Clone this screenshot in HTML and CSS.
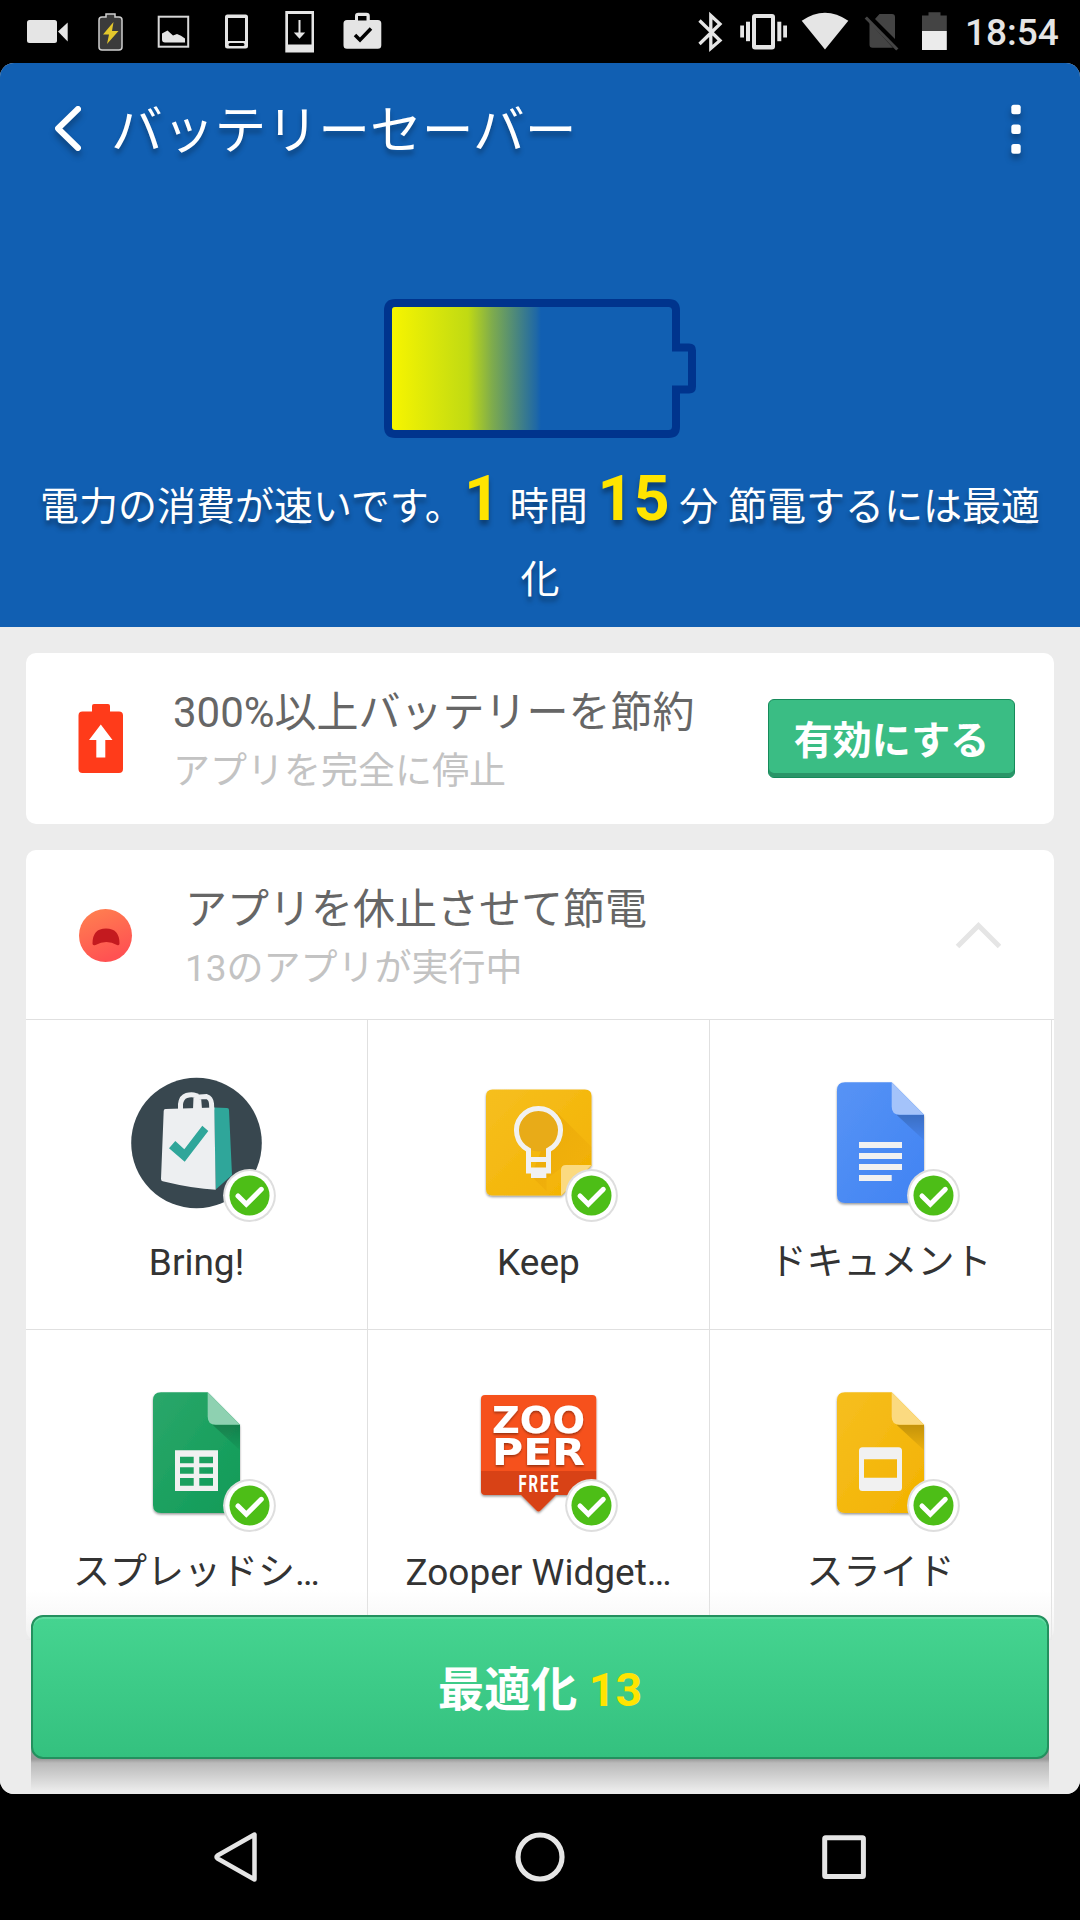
FILE: index.html
```html
<!DOCTYPE html>
<html lang="ja">
<head>
<meta charset="utf-8">
<title>バッテリーセーバー</title>
<link rel="stylesheet" href="styles.css">
</head>
<body>
<svg class="defs" width="0" height="0" aria-hidden="true">
  <defs>
    <linearGradient id="charge" x1="0" x2="1" y1="0" y2="0">
      <stop offset="0" stop-color="#f7f500"/>
      <stop offset=".51" stop-color="#c0da13"/>
      <stop offset=".67" stop-color="#7fac4c"/>
      <stop offset=".97" stop-color="#1f68a6"/>
      <stop offset="1" stop-color="#115fb2"/>
    </linearGradient>
    <linearGradient id="face" x1="0" x2=".4" y1="0" y2="1">
      <stop offset="0" stop-color="#ff8350"/>
      <stop offset="1" stop-color="#ff5252"/>
    </linearGradient>
    <linearGradient id="blue" x1="0" x2="1" y1="0" y2="1"><stop offset="0" stop-color="#5793f5"/><stop offset="1" stop-color="#4083f3"/></linearGradient>
    <linearGradient id="green" x1="0" x2="1" y1="0" y2="1"><stop offset="0" stop-color="#2ba76a"/><stop offset="1" stop-color="#0f9b57"/></linearGradient>
    <linearGradient id="amber" x1="0" x2="1" y1="0" y2="1"><stop offset="0" stop-color="#f6bf20"/><stop offset="1" stop-color="#f3b200"/></linearGradient>
    <linearGradient id="fold-shade" x1="0" x2="0" y1="0" y2="1"><stop offset="0" stop-color="#000" stop-opacity=".2"/><stop offset="1" stop-color="#000" stop-opacity=".03"/></linearGradient>
    <linearGradient id="long-shade" x1="0" x2="1" y1="0" y2="1"><stop offset="0" stop-color="#d98c00" stop-opacity=".35"/><stop offset="1" stop-color="#d98c00" stop-opacity=".02"/></linearGradient>
    <filter id="drop" x="-20%" y="-20%" width="140%" height="140%"><feDropShadow dx="0" dy="1.5" stdDeviation="1.2" flood-opacity=".4"/></filter>
    <symbol id="badge" viewBox="0 0 54 54">
      <circle cx="27" cy="27" r="26.4" fill="#dedede"/>
      <circle cx="27" cy="27" r="24.4" fill="#fff"/>
      <circle cx="27" cy="27" r="20" fill="#4dbe17"/>
      <path d="M15.5 27.5l8.3 8.3 15-15" fill="none" stroke="#fff" stroke-width="5" stroke-linecap="round"/>
    </symbol>
  </defs>
</svg>

<header class="status-bar">
  <svg class="status-icons" width="400" height="63" viewBox="0 0 400 63">
    <g fill="#e5e5e5">
      <rect x="27" y="20" width="30" height="23" rx="2.5"/>
      <path d="M58 31.500l9.700-9v19z"/>
    </g>
    <path d="M102 17h4v-3h9v3h4q3 0 3 3v27q0 3-3 3h-17q-3 0-3-3V20q0-3 3-3z" fill="#3b3b3b" stroke="#cfcfcf" stroke-width="1.500"/>
    <path d="M113.500 22l-10.500 12.500h6l-2 9.500 11.500-13h-6.500z" fill="#e3c72c"/>
    <rect x="158.700" y="16.700" width="29.500" height="30" fill="none" stroke="#d8d8d8" stroke-width="2"/>
    <path d="M162 33.500l5.500-3 5.500 5 4-1.500q4 1 8 4.500v4h-20q-3 0-3-3z" fill="#e5e5e5"/>
    <path d="M227.500 14.500h18q2.500 0 2.500 2.500v29q0 2.500-2.500 2.500h-18q-2.500 0-2.500-2.500V17q0-2.500 2.500-2.500zM228 18v23h17V18zM230 43q-1.500 0-1.500 1.500t1.500 1.500h13q1.500 0 1.500-1.500T243 43z" fill="#e5e5e5" fill-rule="evenodd"/>
    <path d="M285.300 11h28.700v41.500h-28.700zM288 14v30.500h23.500V14z" fill="#e5e5e5" fill-rule="evenodd"/>
    <path d="M298.500 20h2v12.500h4.700l-5.700 6.300-5.700-6.300h4.700z" fill="#e5e5e5"/>
    <path d="M347 20h8v-4q0-3.300 3.300-3.300h8.200q3.300 0 3.300 3.300v4h8q3.500 0 3.500 3.500v21.700q0 3.500-3.500 3.500H347q-3.500 0-3.500-3.500V23.500q0-3.500 3.500-3.500zm11-4v4.500h8.500V16z" fill="#e5e5e5" fill-rule="evenodd"/>
    <path d="M355 35l5 5 11-11.500" fill="none" stroke="#000" stroke-width="3.500"/>
  </svg>
  <div class="status-right">
    <svg width="270" height="63" viewBox="690 0 270 63">
      <path d="M699.500 20.500l20.500 20-9.200 8V15.500l9.200 8.500-20.500 20" fill="none" stroke="#e5e5e5" stroke-width="3.300"/>
      <g fill="#e5e5e5">
        <path d="M755 14h17q3 0 3 3v29.500q0 3-3 3h-17q-3 0-3-3V17q0-3 3-3zm1 4v27h15V18z" fill-rule="evenodd"/>
        <rect x="740.200" y="25.500" width="3.800" height="12"/><rect x="746" y="21.700" width="4" height="19.500"/>
        <rect x="777.300" y="21.700" width="4" height="19.500"/><rect x="783.200" y="25.500" width="3.800" height="12"/>
        <path d="M825 49.500l-23.300-28.700q23.300-16 46.600 0z"/>
      </g>
      <path d="M869.500 22.500v22.300q0 3 3 3H893zM875 19l4.500-5H892q3 0 3 3v22z" fill="#444"/>
      <path d="M865.800 17.500l31.500 32" stroke="#444" stroke-width="3.200"/>
      <path d="M922 15.500h6.500v-3.200h12v3.200h6.300V31H922z" fill="#444"/>
      <path d="M922 31h24.800v19H922z" fill="#ebebeb"/>
    </svg>
    <span class="clock">18:54</span>
  </div>
</header>

<main class="app">
  <section class="hero">
    <div class="title-bar">
      <svg class="back" width="40" height="60" viewBox="0 0 40 60"><path d="M29 10L9 29.500 29 49" fill="none" stroke="#fff" stroke-width="6" stroke-linecap="round" stroke-linejoin="round"/></svg>
      <h1>バッテリーセーバー</h1>
      <svg class="menu" width="10" height="50" viewBox="0 0 10 50" fill="#fff"><rect x=".3" y=".7" width="9.400" height="9.600" rx="2.500"/><rect x=".3" y="20.400" width="9.400" height="9.600" rx="2.500"/><rect x=".3" y="40.100" width="9.400" height="9.600" rx="2.500"/></svg>
    </div>
    <svg class="battery" width="312" height="139" viewBox="0 0 312 139">
      <path d="M11.500 4h273Q292 4 292 11.500V48.500h13q3 0 3 3V87.500q0 3-3 3h-13V127.500Q292 135 284.500 135H11.500Q4 135 4 127.500V11.500Q4 4 11.500 4z" fill="none" stroke="#00348d" stroke-width="8"/>
      <rect x="8" y="8" width="149" height="123" rx="3" fill="url(#charge)"/>
    </svg>
    <p class="estimate">電力の消費が速いです。<b>1</b> 時間 <b>15</b> 分 節電するには最適化</p>
  </section>

  <section class="list">
    <article class="card promo">
      <svg class="promo-icon" width="46" height="70" viewBox="0 0 46 70">
        <path d="M14 7.500V2q0-2 2-2h14q2 0 2 2v5.500h9q4 0 4 4V65q0 4-4 4H4.500q-4 0-4-4V11.500q0-4 4-4z" fill="#ff3b1a"/>
        <path d="M22.800 20.500L34.500 36h-7.200v17.500h-9V36H11z" fill="#fff"/>
      </svg>
      <div class="text">
        <h2>300%以上バッテリーを節約</h2>
        <p>アプリを完全に停止</p>
      </div>
      <button class="enable">有効にする</button>
    </article>

    <article class="card apps">
      <header class="apps-head">
        <svg class="face" width="54" height="54" viewBox="0 0 54 54">
          <circle cx="26.500" cy="27.500" r="26.500" fill="url(#face)"/>
          <path d="M13.500 35.500q0-15 13.500-15t13.500 15q0 2.500-2.500 1.500-10.500-6-21.500 0-3 1-3-1.500z" fill="#c41a1f"/>
        </svg>
        <div class="text">
          <h2>アプリを休止させて節電</h2>
          <p>13のアプリが実行中</p>
        </div>
        <svg class="chevron" width="46" height="28" viewBox="0 0 46 28"><path d="M2.500 25.500L23.500 4.500l21 21" fill="none" stroke="#e5e5e5" stroke-width="5"/></svg>
      </header>
      <div class="grid">
        <div class="app-cell">
          <svg width="160" height="160" viewBox="0 0 160 160">
            <circle cx="80" cy="80" r="65.300" fill="#38474f"/>
            <path d="M97.500 44.500l13 .5q2 0 2 2l3 65-16.300 14.500z" fill="#2fa69a"/>
            <path d="M49 46l48.800-1.500 1.400 82.200q-22-1-53-8.500-1.800-.5-1.700-2.500L47.200 48q0-2 1.800-2z" fill="#edeff1"/>
            <path d="M64 46v-5q1-7 6-8.500t9.500 0q0 3-.5 13.500M83 46l-1-12 8-.5q4.500 1.500 5 7l.3 6" fill="none" stroke="#edeff1" stroke-width="5"/>
            <path d="M52.500 85.300l6.300-7.300 9 8.300 18-23.600 6 5.300-23.600 30.700z" fill="#2fa69a"/>
            <use href="#badge" x="106" y="105.500" width="54" height="54"/>
          </svg>
          <span>Bring!</span>
        </div>
        <div class="app-cell">
          <svg width="160" height="160" viewBox="0 0 160 160">
            <path d="M34 26.500h92.500q6.500 0 6.500 6.500v69.500L103 132.500H34q-6.500 0-6.500-6.500V33q0-6.500 6.500-6.500z" fill="url(#amber)" filter="url(#drop)"/>
            <path d="M98 49l35 35v18.500h-27L88 116v12L72.500 113z" fill="url(#long-shade)"/>
            <path d="M102.500 132.500V107q0-5 5-5H133z" fill="#fbda80"/>
            <circle cx="80" cy="66.500" r="22" fill="#e8ab18"/>
            <path d="M70 108V87a22 22 0 1 1 20 0v21zM70 96.500h20M70 107h20" fill="none" stroke="#f1f1f1" stroke-width="5"/>
            <path d="M72.500 105h15.300v10H72.500z" fill="#f1f1f1"/>
            <use href="#badge" x="106" y="105.500" width="54" height="54"/>
          </svg>
          <span>Keep</span>
        </div>
        <div class="app-cell">
          <svg width="160" height="160" viewBox="0 0 160 160">
            <path d="M44.500 19.300h46.700l32.300 32.400V132q0 8-8 8h-71q-8 0-8-8V27.300q0-8 8-8z" fill="url(#blue)" filter="url(#drop)"/>
            <path d="M96 51.700h27.500v25.500z" fill="url(#fold-shade)"/>
            <path d="M91.200 19.300v24.400q0 8 8 8h24.300z" fill="#a4c3fa"/>
            <path d="M58.500 79h43v6h-43zM58.500 90h43v6h-43zM58.500 101h43v6h-43zM58.500 112h32.700v6H58.500z" fill="#f1f1f1"/>
            <use href="#badge" x="106" y="105.500" width="54" height="54"/>
          </svg>
          <span>ドキュメント</span>
        </div>
        <div class="app-cell">
          <svg width="160" height="160" viewBox="0 0 160 160">
            <path d="M44.500 19.300h46.700l32.300 32.400V132q0 8-8 8h-71q-8 0-8-8V27.300q0-8 8-8z" fill="url(#green)" filter="url(#drop)"/>
            <path d="M96 51.700h27.500v25.500z" fill="url(#fold-shade)"/>
            <path d="M91.200 19.300v24.400q0 8 8 8h24.300z" fill="#8ed1b1"/>
            <path d="M58.500 77.300h43V118h-43zm5 6.400v6.600h13.700v-6.600zm19.300 0v6.600h13.700v-6.600zM63.500 94.300v6.500h13.700v-6.500zm19.300 0v6.500h13.700v-6.500zM63.500 105v7.700h13.700V105zm19.300 0v7.700h13.700V105z" fill="#f1f1f1" fill-rule="evenodd"/>
            <use href="#badge" x="106" y="105.500" width="54" height="54"/>
          </svg>
          <span>スプレッドシ…</span>
        </div>
        <div class="app-cell">
          <svg width="160" height="160" viewBox="0 0 160 160">
            <g filter="url(#drop)">
              <path d="M22.500 98h115.300v20q0 4-4 4H97.500L82 137.500q-2 2-4 0L62.500 122h-36q-4 0-4-4z" fill="#d84315"/>
              <path d="M26.500 22h107.300q4 0 4 4v72H22.500V26q0-4 4-4z" fill="#f6511d"/>
            </g>
            <g class="logo" filter="url(#drop)">
              <text x="33.500" y="60" font-size="37" textLength="93" lengthAdjust="spacingAndGlyphs">ZOO</text>
              <text x="33.500" y="92" font-size="37" textLength="93" lengthAdjust="spacingAndGlyphs">PER</text>
            </g>
            <text class="logo-free" x="60" y="119" font-size="23.500" textLength="42" lengthAdjust="spacingAndGlyphs">FREE</text>
            <use href="#badge" x="106" y="105.500" width="54" height="54"/>
          </svg>
          <span>Zooper Widget…</span>
        </div>
        <div class="app-cell">
          <svg width="160" height="160" viewBox="0 0 160 160">
            <path d="M44.500 19.300h46.700l32.300 32.400V132q0 8-8 8h-71q-8 0-8-8V27.300q0-8 8-8z" fill="url(#amber)" filter="url(#drop)"/>
            <path d="M96 51.700h27.500v25.500z" fill="url(#fold-shade)"/>
            <path d="M91.200 19.300v24.400q0 8 8 8h24.300z" fill="#fbda80"/>
            <path d="M62 74.300h36q3.500 0 3.500 3.500v36.700q0 3.500-3.500 3.500H62q-3.500 0-3.500-3.500V77.800q0-3.500 3.500-3.500zm1.500 12v18.400h33V86.300z" fill="#f1f1f1" fill-rule="evenodd"/>
            <use href="#badge" x="106" y="105.500" width="54" height="54"/>
          </svg>
          <span>スライド</span>
        </div>
      </div>
    </article>
  </section>

  <footer class="action">
    <button class="optimize">最適化 <b>13</b></button>
    <div class="action-shadow"></div>
  </footer>
</main>

<nav class="nav-bar">
  <svg width="50" height="54" viewBox="0 0 50 54"><path d="M43.500 4.500v45L6.500 28.500q-2-1.500 0-3z" fill="none" stroke="#e5e5e5" stroke-width="4.500" stroke-linejoin="round"/></svg>
  <svg width="50" height="54" viewBox="0 0 50 54"><circle cx="25" cy="27" r="22" fill="none" stroke="#e5e5e5" stroke-width="5.200"/></svg>
  <svg width="50" height="54" viewBox="0 0 50 54"><rect x="5.700" y="7.700" width="38.700" height="38.700" rx="1" fill="none" stroke="#e5e5e5" stroke-width="5"/></svg>
</nav>
</body>
</html>
```
FILE: styles.css
```css
* { box-sizing: border-box; }

body {
  margin: 0;
  width: 1080px;
  height: 1920px;
  overflow: hidden;
  display: flex;
  flex-direction: column;
  background: #000;
  font-family: Roboto, "Noto Sans CJK JP", sans-serif;
}

h1, h2, p { margin: 0; font-weight: 400; }
svg { display: block; flex: none; }
button { border: 0; padding: 0; font-family: inherit; }
.defs { position: absolute; }

.status-bar {
  height: 63px;
  flex: none;
  display: flex;
  justify-content: space-between;
}
.status-right { display: flex; padding-right: 20px; }
.clock {
  width: 100px;
  padding-left: 5px;
  color: #e5e5e5;
  font-size: 37px;
  font-weight: 500;
  line-height: 66px;
  white-space: nowrap;
}

.app {
  height: 1731px;
  flex: none;
  position: relative;
  overflow: hidden;
  border-radius: 14px;
  background: #ececec;
}

.hero {
  height: 564px;
  background: #115fb2;
  color: #fff;
}
.title-bar {
  height: 132px;
  display: flex;
  align-items: center;
  padding: 0 59px 0 49px;
}
.title-bar h1 {
  flex: 1;
  padding: 5px 0 0 22px;
  font-size: 51.800px;
  line-height: 64px;
  text-shadow: 0 5px 5px rgba(0, 0, 0, .28);
}
.back, .menu { filter: drop-shadow(0 5px 3px rgba(0, 0, 0, .3)); }
.battery { margin: 104px 0 0 384px; }
.estimate {
  padding: 33px 30px 0;
  font-size: 39px;
  line-height: 73px;
  text-align: center;
  text-shadow: 0 5px 5px rgba(0, 0, 0, .35);
}
.estimate b {
  color: #ffe400;
  font-size: 63px;
  font-weight: 700;
  line-height: 0;
}

.list {
  display: flex;
  flex-direction: column;
  gap: 26px;
  padding: 26px;
}
.card { border-radius: 10px; background: #fff; }
.text { flex: 1; padding-top: 30px; align-self: flex-start; white-space: nowrap; }
.text h2 { color: #666; font-size: 42px; line-height: 60px; }
.text p { color: #c3c3c3; font-size: 37px; line-height: 57px; }

.promo {
  height: 171px;
  display: flex;
  align-items: center;
  padding: 0 39px 0 52px;
}
.promo .text { padding-left: 49px; }
.enable {
  width: 247px;
  height: 79px;
  padding-bottom: 3px;
  border: 1px solid #168a5a;
  border-radius: 6px;
  background: #3abd84;
  box-shadow: inset 0 -4px #2a9568;
  color: #fff;
  font-size: 39px;
  font-weight: 700;
}

.apps-head {
  height: 170px;
  display: flex;
  align-items: center;
  padding: 0 53px;
  border-bottom: 1px solid #e0e0e0;
}
.apps-head .text { padding-left: 52px; }
.grid {
  display: grid;
  grid-template-columns: repeat(3, 342px);
  grid-auto-rows: 310px;
}
.app-cell {
  display: flex;
  flex-direction: column;
  align-items: center;
  padding-top: 43px;
  border-right: 1px solid #e0e0e0;
  border-bottom: 1px solid #e0e0e0;
  color: #333;
  font-size: 37px;
  line-height: 50px;
  white-space: nowrap;
}
.app-cell svg { transform: translateX(-.5px); }
.app-cell span { margin-top: 15px; }
.logo { fill: #fff; font-family: "DejaVu Sans", sans-serif; font-weight: 700; }
.logo-free { fill: #fff; font-family: Roboto, sans-serif; font-weight: 700; letter-spacing: 3px; }

/* Pinned over the scrolling list, which fades out behind it. */
.action {
  position: absolute;
  left: 0;
  right: 0;
  bottom: 0;
  height: 204px;
  padding: 25px 31px 0;
  isolation: isolate;
  background: linear-gradient(rgba(236, 236, 236, 0), rgba(236, 236, 236, .3) 25px, #ececec 60px);
}
.optimize {
  display: block;
  width: 1018px;
  height: 144px;
  padding-bottom: 3px;
  border: 2px solid #23905e;
  border-radius: 12px;
  background: linear-gradient(#45d490, #34c17f);
  box-shadow: inset 0 2px rgba(255, 255, 255, .15);
  color: #fff;
  font-size: 46.500px;
  font-weight: 700;
}
.optimize b { color: #ffe400; font-weight: 700; }
.action-shadow {
  height: 47px;
  margin-top: -12px;
  background: linear-gradient(#999 12px, #bababa 16px, #cbcbcb 26px, #ececec 44px);
  position: relative;
  z-index: -1;
}

.nav-bar {
  height: 126px;
  flex: none;
  display: flex;
  align-items: center;
  justify-content: space-between;
  padding: 0 211px;
}
```
